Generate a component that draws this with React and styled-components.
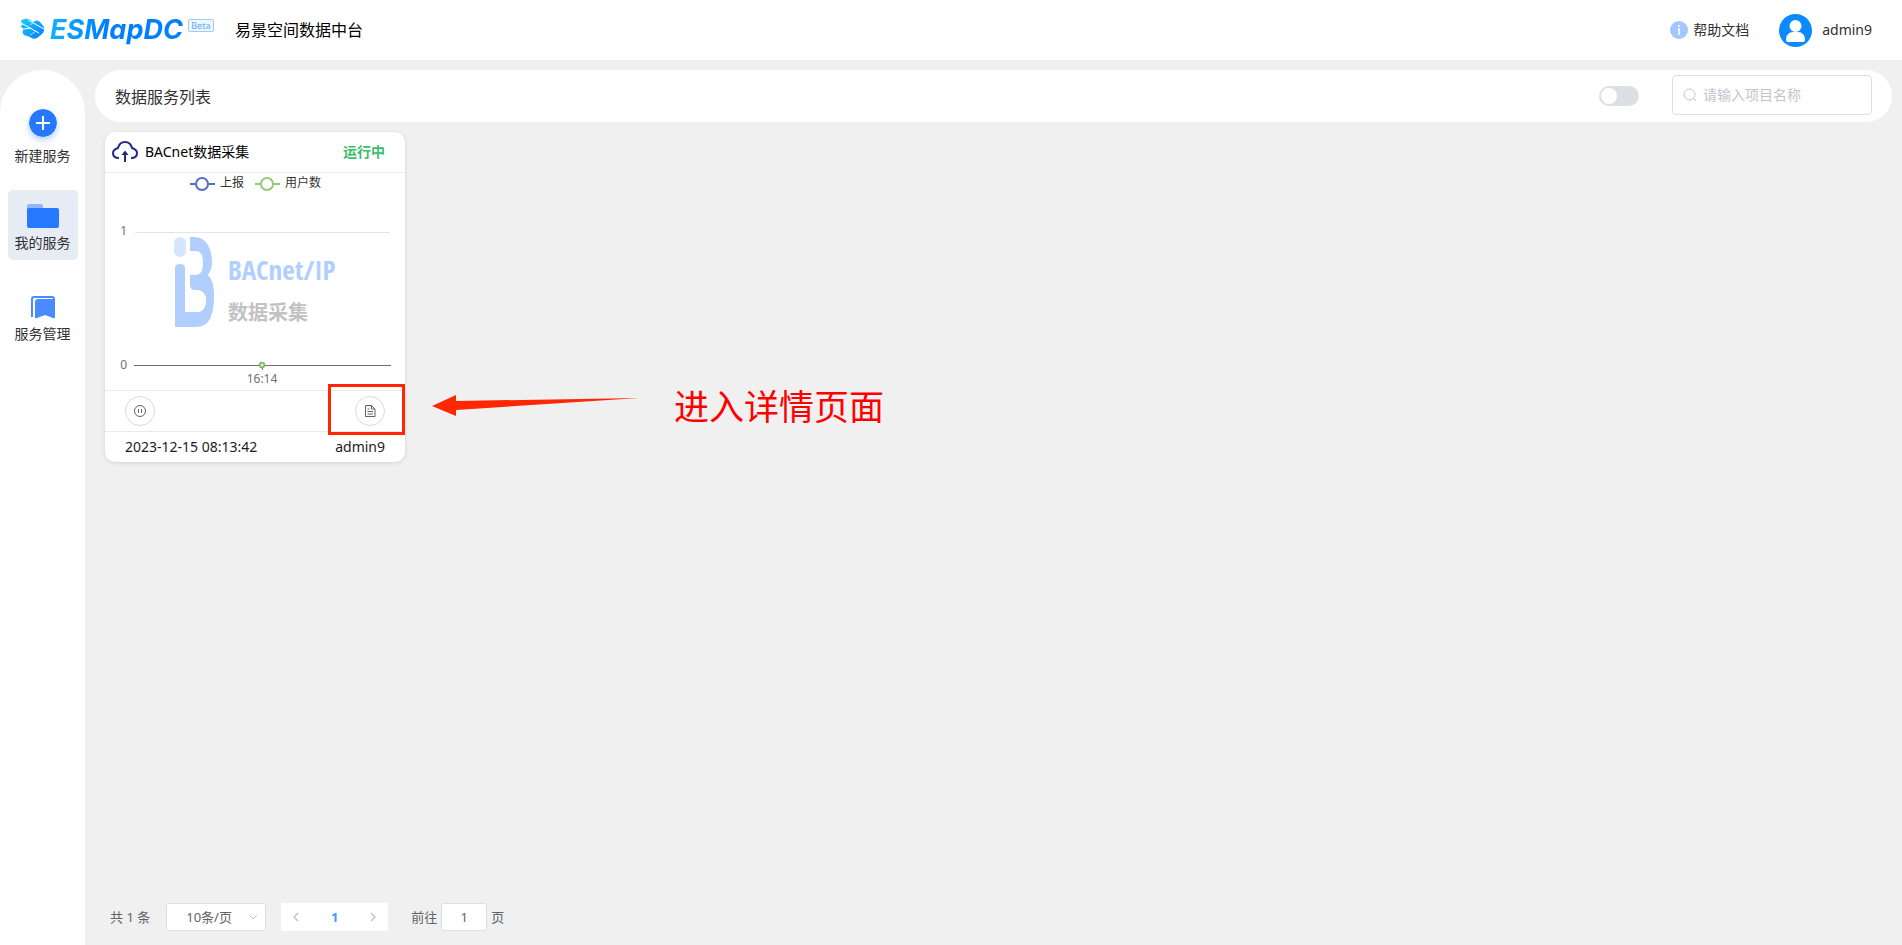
import React, { useState } from 'react';
import styled, { createGlobalStyle } from 'styled-components';

const GlobalStyle = createGlobalStyle`
  * {
    box-sizing: border-box;
  }
  body {
    margin: 0;
    background-color: #f0f0f0;
    color: #303133;
    font-family: "Noto Sans", "Noto Sans CJK SC", sans-serif;
    font-size: 14px;
    line-height: 20px;
  }
  button, input, select {
    font: inherit;
    color: inherit;
  }
`;

const MainContainer = styled.div`
  display: flex;
  flex-direction: column;
  min-height: 100vh;
`;

const Top = styled.header`
  height: 60px;
  background-color: #fff;
  padding: 0 30px 0 20px;
  display: flex;
  align-items: center;
`;

const Logo = styled.div`
  display: flex;
  align-items: center;
  height: 60px;
`;

const LogoName = styled.span`
  margin-left: 4px;
  padding-right: 5px;
  font-family: Inter, "Liberation Sans", sans-serif;
  font-size: 27px;
  font-style: italic;
  font-weight: 700;
  line-height: 36px;
  color: transparent;
  background: linear-gradient(100deg, #12b4ff, #0080ff 40%);
  -webkit-background-clip: text;
  background-clip: text;
`;

const Beta = styled.span`
  align-self: flex-start;
  margin-top: 19px;
  width: 26px;
  height: 13px;
  border: 1px solid #9fcbff;
  border-radius: 2px;
  background-color: #eef6ff;
  color: #62a8fa;
  font-size: 9px;
  line-height: 11px;
  text-align: center;
`;

const SiteName = styled.h1`
  flex: 1;
  margin: 0 0 0 21px;
  color: #000;
  font-size: 16px;
  font-weight: 400;
`;

const HelpLink = styled.a`
  display: flex;
  align-items: center;
  gap: 5px;
  color: #303133;
  text-decoration: none;
`;

const UserLink = styled(HelpLink)`
  gap: 10px;
  margin-left: 30px;
`;

const Body = styled.div`
  flex: 1;
  display: flex;
  gap: 10px;
  padding-top: 10px;
`;

const SideBar = styled.nav`
  flex: 0 0 85px;
  display: flex;
  flex-direction: column;
  align-items: center;
  gap: 19px;
  padding-top: 31px;
  background-color: #fff;
  border-radius: 43px 43px 0 0;
`;

const SideButton = styled.button`
  display: flex;
  flex-direction: column;
  align-items: center;
  justify-content: flex-end;
  width: 70px;
  height: 70px;
  padding: 0 0 ${(props) => (props.$active ? '6px' : '4px')};
  border: none;
  border-radius: 5px;
  background-color: ${(props) => (props.$active ? '#e6ebf4' : 'transparent')};
  line-height: 22px;
  white-space: nowrap;
  cursor: pointer;
`;

const IconSlot = styled.span`
  flex: 1;
  display: flex;
  align-items: flex-end;
  padding-bottom: 4px;
`;

const AddIcon = styled.svg`
  margin-bottom: 4px;
  border-radius: 50%;
  box-shadow: 0 3px 6px rgba(38, 120, 255, 0.35);
`;

const Content = styled.main`
  flex: 1;
  display: flex;
  flex-direction: column;
  padding-right: 10px;
`;

const ListBar = styled.div`
  display: flex;
  align-items: center;
  height: 52px;
  padding: 0 20px;
  background-color: #fff;
  border-radius: 26px;
`;

const ListTitle = styled.h2`
  flex: 1;
  margin: 0;
  padding-top: 2px;
  font-size: 16px;
  font-weight: 400;
`;

const Switch = styled.input`
  appearance: none;
  display: flex;
  align-items: center;
  width: 40px;
  height: 20px;
  margin: 0;
  padding: 0 2px;
  border-radius: 10px;
  background-color: #dcdfe6;
  cursor: pointer;
  &::before {
    content: '';
    width: 16px;
    height: 16px;
    border-radius: 50%;
    background-color: #fff;
  }
  &:checked {
    justify-content: flex-end;
    background-color: #409eff;
  }
`;

const SearchBox = styled.label`
  display: flex;
  align-items: center;
  gap: 6px;
  width: 200px;
  height: 40px;
  margin: 0 0 2px 33px;
  padding: 0 10px;
  border: 1px solid #dcdfe6;
  border-radius: 4px;
`;

const SearchInput = styled.input`
  flex: 1;
  min-width: 0;
  padding: 0;
  border: none;
  outline: none;
  background: none;
  &::placeholder {
    color: #bfc4cd;
  }
`;

const CardList = styled.div`
  flex: 1;
  padding: 10px;
`;

const Card = styled.article`
  position: relative;
  width: 300px;
  background-color: #fff;
  border-radius: 10px;
  box-shadow: 0 1px 4px rgba(0, 0, 0, 0.12);
`;

const CardHeader = styled.div`
  display: flex;
  align-items: center;
  height: 41px;
  padding: 0 20px 0 7px;
  border-bottom: 1px solid #ebebeb;
`;

const CardTitle = styled.h3`
  flex: 1;
  margin: 0 0 0 7px;
  color: #000;
  font-size: 14px;
  font-weight: 400;
`;

const CardState = styled.span`
  color: #3cbf6c;
  font-weight: 700;
`;

const Chart = styled.svg`
  display: block;
  font-size: 12px;
`;

const Watermark = styled.text`
  font-family: ${(props) => (props.$cjk ? '"Noto Sans CJK SC"' : '"Open Sans Condensed", "Open Sans"')}, sans-serif;
  font-size: ${(props) => (props.$cjk ? '20px' : '27px')};
  font-weight: 700;
  fill: ${(props) => (props.$cjk ? '#c2c2c2' : '#b0cfff')};
`;

const CardActions = styled.div`
  display: flex;
  align-items: center;
  justify-content: space-between;
  height: 42px;
  padding: 0 20px;
  border-top: 1px solid #ebebeb;
  border-bottom: 1px solid #ebebeb;
`;

const RoundButton = styled.button`
  display: flex;
  align-items: center;
  justify-content: center;
  width: 30px;
  height: 30px;
  padding: 0;
  border: 1px solid #d9d8e6;
  border-radius: 50%;
  background-color: #fff;
  color: #606266;
  cursor: pointer;
`;

const CardFooter = styled.div`
  display: flex;
  justify-content: space-between;
  padding: 5px 20px;
  color: #1c1c1c;
`;

const DetailFrame = styled.div`
  position: absolute;
  right: 0;
  bottom: 27px;
  width: 77px;
  height: 51px;
  border: 3px solid #ff2600;
  pointer-events: none;
`;

const DetailNote = styled.div`
  position: absolute;
  left: 326px;
  bottom: 30px;
  display: flex;
  align-items: center;
  gap: 33px;
  color: #ff0000;
  font-size: 35px;
  line-height: 50px;
  white-space: nowrap;
`;

const Pagination = styled.div`
  display: flex;
  align-items: center;
  padding: 0 15px 14px;
  color: #606266;
  font-size: 13px;
  line-height: 28px;
`;

const SizeBox = styled.span`
  display: flex;
  align-items: center;
  width: 100px;
  height: 28px;
  margin: 0 15px 0 16px;
  padding-right: 6px;
  border: 1px solid #dcdfe6;
  border-radius: 3px;
  background-color: #fff;
`;

const SizeSelect = styled.select`
  appearance: none;
  flex: 1;
  min-width: 0;
  padding: 0 0 0 19px;
  border: none;
  outline: none;
  background: none;
`;

const Pager = styled.div`
  display: flex;
  margin-right: 23px;
  background-color: #fff;
`;

const PageButton = styled.button`
  display: flex;
  align-items: center;
  justify-content: center;
  width: ${(props) => (props.$current ? '47px' : '30px')};
  height: 28px;
  padding: 0;
  border: none;
  background: none;
  color: ${(props) => (props.$current ? '#409eff' : '#c0c4cc')};
  font-weight: 700;
`;

const Jump = styled.label`
  display: flex;
  align-items: center;
  gap: 4px;
`;

const JumpInput = styled.input`
  width: 46px;
  height: 28px;
  padding: 0;
  border: 1px solid #dcdfe6;
  border-radius: 3px;
  background-color: #fff;
  text-align: center;
`;

const LogoMark = () => (
  <svg width="26" height="24" viewBox="0 0 26 24">
    <defs>
      <linearGradient id="mark" x1="0" y1="0" x2="1" y2="1">
        <stop offset="0" stopColor="#1cd0ff" />
        <stop offset="1" stopColor="#0878ff" />
      </linearGradient>
    </defs>
    <path d="M1 4 Q1 1 5 1 Q9 0 13 4 Q17 1 20 4 L24 9 Q25 13 22 16 L17 20 Q13 22 10 19 L4 17 Q1 14 4 11 L1 9 Q0 7 3 7 Z" fill="url(#mark)" />
    <path d="M1 5 L19 15 M8 2 L24 11 M4 11 L11 10" fill="none" stroke="#fff" strokeWidth="1" />
    <path d="M14 4 L10 7 M10 17 L16 13" fill="none" stroke="#9fdcff" strokeWidth="1" />
  </svg>
);

const ServiceChart = () => (
  <Chart width="100%" height="217" viewBox="0 0 300 217">
    <g strokeWidth="2" fill="#fff">
      <path d="M85 11 H110" stroke="#5470c6" />
      <circle cx="97" cy="11" r="6" stroke="#5470c6" />
      <path d="M150 11 H175" stroke="#91cc75" />
      <circle cx="162" cy="11" r="6" stroke="#91cc75" />
    </g>
    <text x="115" y="14" fill="#333">上报</text>
    <text x="180" y="14" fill="#333">用户数</text>
    <path d="M30 59.5 H285" stroke="#e0e6f1" />
    <rect x="69" y="64" width="12" height="20" rx="6" fill="#d6e6ff" />
    <path
      d="M85 64 H90 C101 64 107 76 107 89 C107 95 105 99 103 102 C107 106 109 113 109 122 C109 143 104 154 91 154 H70 V95 Q70 91 75 91 Q80 91 80 95 V139 H93 C98 139 101 134 101 128 C101 121 98 117 92 117 H90 Q85 117 85 112 V102 H91 C96 102 98 97 98 90 C98 83 96 78 91 78 H85 Z"
      fill="#b0cfff"
    />
    <Watermark x="123" y="107">BACnet/IP</Watermark>
    <Watermark x="123" y="147" $cjk>数据采集</Watermark>
    <g fill="#6e7079">
      <text x="22" y="62" textAnchor="end">1</text>
      <text x="22" y="196" textAnchor="end">0</text>
      <text x="157" y="210" textAnchor="middle">16:14</text>
    </g>
    <path d="M29 192.5 H286 M157.500 192 V197" stroke="#6e7079" />
    <circle cx="157" cy="192" r="2" fill="#fff" stroke="#91cc75" strokeWidth="2" />
    <circle cx="157" cy="192" r="3" fill="none" stroke="#5f8f7c" strokeWidth="1" opacity="0.5" />
  </Chart>
);

const ServiceCard = ({ title, state, time, user }) => (
  <Card>
    <CardHeader>
      <svg width="26" height="22" viewBox="0 0 26 22" fill="none" stroke="#1f2b85" strokeWidth="2">
        <path d="M7 17 C3 17 1 15 1 12 C1 9 3 8 6 7 C7 3 9 1 13 1 C17 1 19 3 20 7 C23 8 25 9 25 12 C25 15 23 17 19 17" />
        <path d="M13 21 V12" />
        <path d="M9.500 14 L13 9.500 L16.500 14 Z" fill="#1f2b85" stroke="none" />
      </svg>
      <CardTitle>{title}</CardTitle>
      <CardState>{state}</CardState>
    </CardHeader>
    <ServiceChart />
    <CardActions>
      <RoundButton aria-label="暂停">
        <svg width="14" height="14" viewBox="0 0 14 14" fill="none" stroke="currentColor">
          <circle cx="7" cy="7" r="5.500" />
          <path d="M5.500 5 V9 M8.500 5 V9" />
        </svg>
      </RoundButton>
      <RoundButton aria-label="详情">
        <svg width="14" height="14" viewBox="0 0 14 14" fill="none" stroke="currentColor">
          <path d="M2.500 1.500 H8.500 L12 5 V12.500 H2.500 Z M8.500 1.500 V5 H12 M4.500 5 H6.500 M4.500 7.500 H10 M4.500 10 H10" />
        </svg>
      </RoundButton>
    </CardActions>
    <CardFooter>
      <time>{time}</time>
      <span>{user}</span>
    </CardFooter>
    <DetailFrame />
    <DetailNote>
      <svg width="210" height="24" viewBox="0 0 210 24" fill="#ff2600">
        <path d="M1 11 L25 0 V6 L208 3 L25 15 V21 Z" />
      </svg>
      <span>进入详情页面</span>
    </DetailNote>
  </Card>
);

const App = () => {
  const [active, setActive] = useState('mine');
  const [page, setPage] = useState('1');

  return (
    <MainContainer>
      <GlobalStyle />
      <Top>
        <Logo>
          <LogoMark />
          <LogoName>ESMapDC</LogoName>
          <Beta>Beta</Beta>
        </Logo>
        <SiteName>易景空间数据中台</SiteName>
        <HelpLink href="#help">
          <svg width="18" height="18" viewBox="0 0 18 18">
            <circle cx="9" cy="9" r="9" fill="#a3c6ff" />
            <path d="M9 4 V6 M9 7 V14" stroke="#eaf2ff" strokeWidth="2" />
          </svg>
          帮助文档
        </HelpLink>
        <UserLink href="#user">
          <svg width="33" height="33" viewBox="0 0 33 33">
            <circle cx="16.500" cy="16.500" r="16.500" fill="#0a8aff" />
            <circle cx="16.500" cy="12" r="6" fill="#fff" />
            <path d="M7 26 C7 21 10 18 14 18 H19 C23 18 26 21 26 26 Q26 28 24 28 H9 Q7 28 7 26 Z" fill="#fff" />
          </svg>
          admin9
        </UserLink>
      </Top>
      <Body>
        <SideBar>
          <SideButton $active={active === 'new'} onClick={() => setActive('new')}>
            <IconSlot>
              <AddIcon width="28" height="28" viewBox="0 0 28 28">
                <circle cx="14" cy="14" r="14" fill="#2678ff" />
                <path d="M7 14 H21 M14 7 V21" stroke="#fff" strokeWidth="2" />
              </AddIcon>
            </IconSlot>
            新建服务
          </SideButton>
          <SideButton $active={active === 'mine'} onClick={() => setActive('mine')}>
            <IconSlot>
              <svg width="32" height="24" viewBox="0 0 32 24">
                <path d="M0 6 V2 Q0 0 2 0 H14 Q16 0 16 2 V6 Z" fill="#8fb8fb" />
                <rect y="4" width="32" height="20" rx="2" fill="#2678ff" />
              </svg>
            </IconSlot>
            我的服务
          </SideButton>
          <SideButton $active={active === 'manage'} onClick={() => setActive('manage')}>
            <IconSlot>
              <svg width="26" height="24" viewBox="0 0 26 24">
                <path d="M2 22 V4 Q2 2 4 2 H22 Q24 2 24 4" fill="none" stroke="#4a8cff" strokeWidth="2" />
                <path d="M5 22 V7 Q5 4 8 4 H25 V22 Q25 24 23 23 L15 20 L7 23 Q5 24 5 22 Z" fill="#4a8cff" />
              </svg>
            </IconSlot>
            服务管理
          </SideButton>
        </SideBar>
        <Content>
          <ListBar>
            <ListTitle>数据服务列表</ListTitle>
            <Switch type="checkbox" role="switch" aria-label="自动刷新" />
            <SearchBox>
              <svg width="14" height="14" viewBox="0 0 14 14" fill="none" stroke="#bfc4cd">
                <circle cx="6.500" cy="6.500" r="5.500" />
                <path d="M10.500 10.500 L13 13" />
              </svg>
              <SearchInput type="text" placeholder="请输入项目名称" aria-label="项目名称" />
            </SearchBox>
          </ListBar>
          <CardList>
            <ServiceCard title="BACnet数据采集" state="运行中" time="2023-12-15 08:13:42" user="admin9" />
          </CardList>
          <Pagination>
            <span>共 1 条</span>
            <SizeBox>
              <SizeSelect aria-label="每页条数">
                <option>10条/页</option>
                <option>20条/页</option>
              </SizeSelect>
              <svg width="12" height="12" viewBox="0 0 12 12" fill="none" stroke="#c0c4cc">
                <path d="M2 4 L6 8 L10 4" />
              </svg>
            </SizeBox>
            <Pager>
              <PageButton aria-label="上一页" disabled>
                <svg width="12" height="12" viewBox="0 0 12 12" fill="none" stroke="currentColor" strokeWidth="1.500">
                  <path d="M8 2 L4 6 L8 10" />
                </svg>
              </PageButton>
              <PageButton $current>1</PageButton>
              <PageButton aria-label="下一页" disabled>
                <svg width="12" height="12" viewBox="0 0 12 12" fill="none" stroke="currentColor" strokeWidth="1.500">
                  <path d="M4 2 L8 6 L4 10" />
                </svg>
              </PageButton>
            </Pager>
            <Jump>
              前往
              <JumpInput type="text" value={page} onChange={(e) => setPage(e.target.value)} />
              页
            </Jump>
          </Pagination>
        </Content>
      </Body>
    </MainContainer>
  );
};

export default App;
